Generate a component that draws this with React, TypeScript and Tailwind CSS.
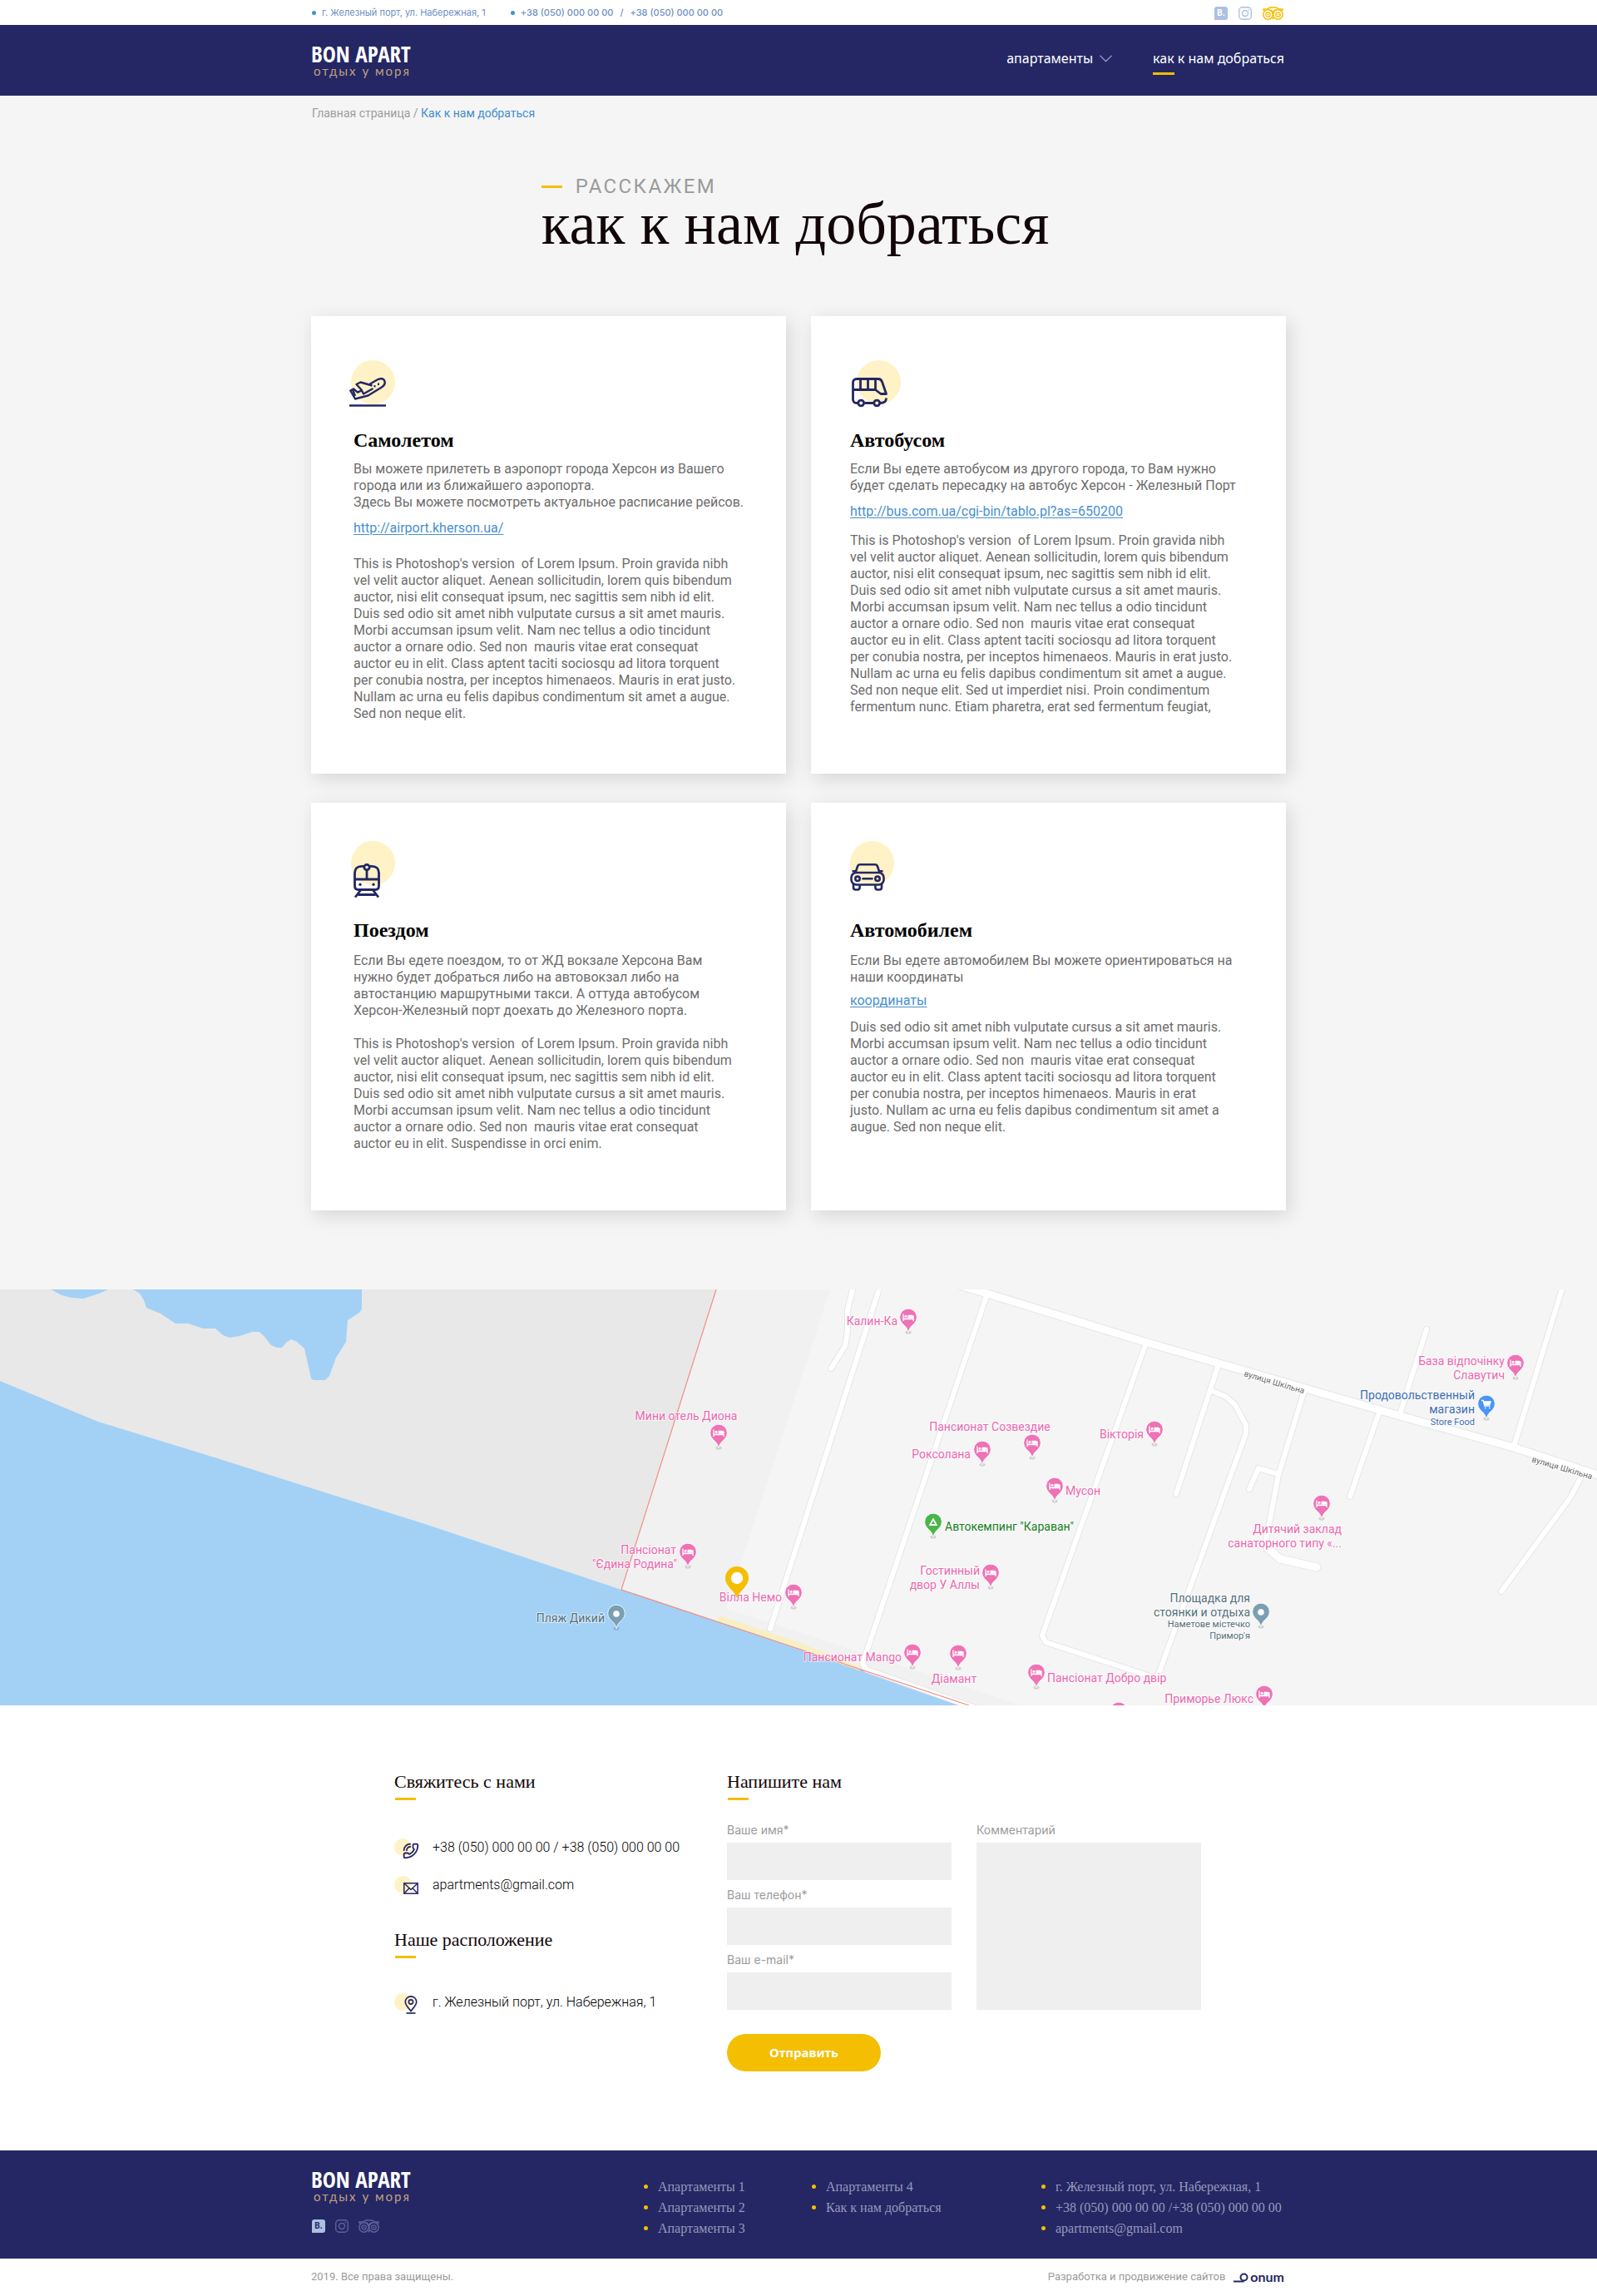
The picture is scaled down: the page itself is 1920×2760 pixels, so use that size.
import type { ReactNode } from "react";
import { PhoneCall } from "lucide-react";

const sans = "font-['Roboto',sans-serif]";
const serif = "font-['Liberation_Serif',serif]";

/* ---------- shared pieces ---------- */

function Container({ className = "", children }: { className?: string; children: ReactNode }) {
  return <div className={`mx-auto w-full max-w-[1172px] ${className}`}>{children}</div>;
}

function Logo() {
  return (
    <a href="#" className="flex w-fit flex-col whitespace-nowrap">
      <span className="font-['Open_Sans_Condensed','Roboto_Condensed',sans-serif] text-[27px] leading-6 font-bold text-white">
        BON APART
      </span>
      <span className="pl-[3px] font-['Lato',sans-serif] text-[15px] leading-4 tracking-[2px] text-[#c2a17c]">
        отдых у моря
      </span>
    </a>
  );
}

function BookingIcon({ className }: { className: string }) {
  return (
    <span
      className={`flex size-4 items-center justify-center rounded-[3px] rounded-bl-none font-['Roboto',sans-serif] text-[10px] leading-none font-bold ${className}`}
    >
      B.
    </span>
  );
}

function InstagramIcon() {
  return (
    <svg viewBox="0 0 16 16" className="size-4" fill="none" stroke="currentColor" strokeWidth="1.4">
      <rect x="0.7" y="0.7" width="14.6" height="14.6" rx="4" />
      <circle cx="8" cy="8" r="3.5" />
      <circle cx="12.2" cy="3.8" r="0.5" fill="currentColor" strokeWidth="0.8" />
    </svg>
  );
}

function TripadvisorIcon() {
  return (
    <svg viewBox="0 0 25 16" className="h-4 w-[25px]" fill="none" stroke="currentColor" strokeWidth="1.5">
      <circle cx="6.5" cy="9.5" r="5.7" />
      <circle cx="18.5" cy="9.5" r="5.7" />
      <circle cx="6.5" cy="9.5" r="2.7" strokeWidth="1.3" />
      <circle cx="18.5" cy="9.5" r="2.7" strokeWidth="1.3" />
      <circle cx="6.5" cy="9.5" r="0.9" fill="currentColor" stroke="none" />
      <circle cx="18.5" cy="9.5" r="0.9" fill="currentColor" stroke="none" />
      <path d="M0.300 3H5C7 1.500 9.600 0.800 12.500 0.800S18 1.500 20 3h4.700M0.500 3l1.800 2.500M24.500 3l-1.800 2.500M8.500 3.500c2.500.8 4 2.500 4 5 0-2.500 1.500-4.200 4-5" />
      <path d="M10.900 13h3.200l-1.600 3z" fill="currentColor" stroke="none" />
    </svg>
  );
}

/* ---------- header ---------- */

function TopBar() {
  return (
    <div className="bg-white font-['Inter',sans-serif] text-[11px] text-[#6d8fc4]">
      <Container className="flex h-[30px] items-center justify-between">
        <ul className="flex items-center gap-[30px]">
          <li className="flex items-center gap-[7px] pl-[1px]">
            <span className="size-[5px] rounded-full bg-[#4790cf]" />
            г. Железный порт, ул. Набережная, 1
          </li>
          <li className="flex items-center gap-[7px] font-medium">
            <span className="size-[5px] rounded-full bg-[#4790cf]" />
            <span className="flex gap-2">
              <a href="tel:+380500000000">+38 (050) 000 00 00</a>
              <span>/</span>
              <a href="tel:+380500000000">+38 (050) 000 00 00</a>
            </span>
          </li>
        </ul>
        <div className="flex items-center gap-[13px] pt-[2px] pr-[3px] text-[#adc0e2]">
          <a href="#" aria-label="Booking">
            <BookingIcon className="bg-[#adc0e2] text-white" />
          </a>
          <a href="#" aria-label="Instagram">
            <InstagramIcon />
          </a>
          <a href="#" aria-label="Tripadvisor" className="text-[#f4be02]">
            <TripadvisorIcon />
          </a>
        </div>
      </Container>
    </div>
  );
}

function Header() {
  return (
    <header className="bg-[#242764]">
      <Container className="flex h-[85px] items-start justify-between pt-[23px]">
        <Logo />
        <nav className="flex items-start gap-[49px] pt-[3px] pr-[2px] font-['Noto_Sans',sans-serif] text-base leading-7 text-white">
          <a href="#" className="flex items-center gap-2">
            апартаменты
            <svg viewBox="0 0 15 9" className="h-[9px] w-[15px]" fill="none" stroke="#9294b8" strokeWidth="1.400">
              <path d="M0.500 0.800l7 7 7-7" />
            </svg>
          </a>
          <a href="#" className="flex flex-col">
            как к нам добраться
            <span className="mt-[3px] h-[3px] w-[26px] bg-[#f4be02]" />
          </a>
        </nav>
      </Container>
    </header>
  );
}

/* ---------- transport icons ---------- */

function PlaneIcon() {
  return (
    <svg viewBox="0 0 44 36" className="h-9 w-11" fill="none" stroke="#242764" strokeWidth="2.400" strokeLinejoin="round">
      <path d="M24.500 7.800 34 2.300c3.600-2 7.200-1.200 8.300 1.500 1.100 2.900-.4 5.900-3.400 7.700L22.500 21.500 7 25.500 1.300 15.500l3.700-2 5 4.200 4.300-2.100" />
      <path d="M27.500 9.500 13.500 5.500 8.500 8l6 6.500 2.500 5 11.500-6.500" />
      <path d="M4 14.500l3 7.500" />
      <path d="M29.500 10.200h2M34 7.700h2" strokeWidth="2.600" />
      <path d="M0 33.500h44" />
    </svg>
  );
}

function BusIcon() {
  return (
    <svg viewBox="0 0 43 36" className="h-9 w-[43px]" fill="none" stroke="#242764" strokeWidth="2.800" strokeLinejoin="round">
      <path d="M7.500 30.500H6c-3 0-4.500-2-4.500-4.500V6c0-3 1.500-4.500 4.500-4.500h26c2.600 0 3.600 1 4.500 3.500l5 14.500H35l-6.500-5h-27M15.500 30.500h10.500M34 30.500c5 0 7.500-2 7.500-6" />
      <path d="M10.500 1.500v13M19.500 1.500v13M28.500 1.500v13" />
      <circle cx="11.200" cy="30.500" r="3.400" />
      <circle cx="30.200" cy="30.500" r="3.400" />
    </svg>
  );
}

function TrainIcon() {
  return (
    <svg viewBox="0 0 32 41" className="h-[41px] w-8" fill="none" stroke="#242764" strokeWidth="2.800" strokeLinejoin="round">
      <path d="M12 3.300H9.500c-5 0-8 3-8 8V27c0 3 1.500 4.500 4.500 4.500h20c3 0 4.500-1.500 4.500-4.500V11.300c0-5-3-8-8-8H20" />
      <circle cx="16" cy="4.500" r="3.200" />
      <path d="M16 8v11M1.500 19h29M9 31.500l-7 9M23 31.500l7 9M5.500 37.500h21" />
      <circle cx="8" cy="25.300" r="1.700" fill="#242764" stroke="none" />
      <circle cx="24" cy="25.300" r="1.700" fill="#242764" stroke="none" />
    </svg>
  );
}

function CarIcon() {
  return (
    <svg viewBox="0 0 42 33" className="h-[33px] w-[42px]" fill="none" stroke="#242764" strokeWidth="2.600" strokeLinejoin="round">
      <path d="M6.500 11 9 3.500c.5-1.500 1.200-2.200 3-2.200h18c1.800 0 2.500.7 3 2.200L35.500 11M6.500 9.300H2.500M35.500 9.300h4" />
      <rect x="1.500" y="11" width="39" height="14.500" rx="6" />
      <circle cx="9" cy="18.300" r="2.700" />
      <circle cx="33" cy="18.300" r="2.700" />
      <path d="M15.500 18.300h11" strokeLinecap="round" />
      <path d="M4 25v3.500c0 2.200 1 3 2.700 3h2.200c1.700 0 2.700-.8 2.700-3V25.500M30.400 25.500v3c0 2.200 1 3 2.700 3h2.200c1.700 0 2.700-.8 2.700-3V25" />
    </svg>
  );
}

/* ---------- cards ---------- */

interface CardProps {
  title: string;
  icon: ReactNode;
  circle: string;
  iconPlace: string;
  className: string;
  titleClass: string;
  intro: string[];
  link?: { text: string; className: string };
  bodyClass: string;
  body: string[];
}

function Lines({ lines, className = "" }: { lines: string[]; className?: string }) {
  return <p className={`whitespace-pre-line ${className}`}>{lines.join("\n").replace(/ {2}/g, "\u00a0 ")}</p>;
}

function Card({ title, icon, circle, iconPlace, className, titleClass, intro, link, bodyClass, body }: CardProps) {
  return (
    <article className={`bg-white pr-6 shadow-[4px_6px_22px_rgba(0,0,0,0.13)] ${className}`}>
      <div className="relative h-[60px]">
        <span className={`absolute top-0 size-[53px] rounded-full bg-[#fff2c6] ${circle}`} />
        <span className={`absolute ${iconPlace}`}>{icon}</span>
      </div>
      <h2 className={`text-2xl leading-7 font-bold text-black ${serif} ${titleClass}`}>{title}</h2>
      <div className={`text-base leading-5 text-[#6d6d6d] ${sans}`}>
        <Lines lines={intro} />
        {link && (
          <a href="#" className={`block w-fit text-[#4790cf] underline underline-offset-2 ${link.className}`}>
            {link.text}
          </a>
        )}
        <Lines lines={body} className={bodyClass} />
      </div>
    </article>
  );
}

const lorem = [
  "This is Photoshop's version  of Lorem Ipsum. Proin gravida nibh",
  "vel velit auctor aliquet. Aenean sollicitudin, lorem quis bibendum",
  "auctor, nisi elit consequat ipsum, nec sagittis sem nibh id elit.",
  "Duis sed odio sit amet nibh vulputate cursus a sit amet mauris.",
  "Morbi accumsan ipsum velit. Nam nec tellus a odio tincidunt",
  "auctor a ornare odio. Sed non  mauris vitae erat consequat",
  "auctor eu in elit. Class aptent taciti sociosqu ad litora torquent",
  "per conubia nostra, per inceptos himenaeos. Mauris in erat justo.",
  "Nullam ac urna eu felis dapibus condimentum sit amet a augue.",
];

const cards: CardProps[] = [
  {
    title: "Самолетом",
    icon: <PlaneIcon />,
    circle: "-left-[3px]",
    iconPlace: "top-[21px] -left-[5px]",
    className: "pt-[53px] pb-[62px] pl-[51px]",
    titleClass: "mt-[22px] mb-[11px]",
    intro: [
      "Вы можете прилететь в аэропорт города Херсон из Вашего",
      "города или из ближайшего аэропорта.",
      "Здесь Вы можете посмотреть актуальное расписание рейсов.",
    ],
    link: { text: "http://airport.kherson.ua/", className: "mt-[11px]" },
    bodyClass: "mt-[23px]",
    body: [...lorem, "Sed non neque elit."],
  },
  {
    title: "Автобусом",
    icon: <BusIcon />,
    circle: "left-[8px]",
    iconPlace: "top-[21px] left-[2px]",
    className: "pt-[53px] pb-[62px] pl-[47px]",
    titleClass: "mt-[22px] mb-[11px]",
    intro: [
      "Если Вы едете автобусом из другого города, то Вам нужно",
      "будет сделать пересадку на автобус Херсон - Железный Порт",
    ],
    link: { text: "http://bus.com.ua/cgi-bin/tablo.pl?as=650200", className: "mt-[11px]" },
    bodyClass: "mt-[15px]",
    body: [
      ...lorem,
      "Sed non neque elit. Sed ut imperdiet nisi. Proin condimentum",
      "fermentum nunc. Etiam pharetra, erat sed fermentum feugiat,",
    ],
  },
  {
    title: "Поездом",
    icon: <TrainIcon />,
    circle: "-left-[3px]",
    iconPlace: "top-[27px] left-0",
    className: "pt-[46px] pb-[70px] pl-[51px]",
    titleClass: "mt-[33px] mb-[13px]",
    intro: [
      "Если Вы едете поездом, то от ЖД вокзале Херсона Вам",
      "нужно будет добраться либо на автовокзал либо на",
      "автостанцию маршрутными такси. А оттуда автобусом",
      "Херсон-Железный порт доехать до Железного порта.",
    ],
    bodyClass: "mt-5",
    body: [...lorem.slice(0, 6), "auctor eu in elit. Suspendisse in orci enim."],
  },
  {
    title: "Автомобилем",
    icon: <CarIcon />,
    circle: "left-0",
    iconPlace: "top-[27px] left-0",
    className: "pt-[46px] pb-[70px] pl-[47px]",
    titleClass: "mt-[33px] mb-[13px]",
    intro: ["Если Вы едете автомобилем Вы можете ориентироваться на", "наши координаты"],
    link: { text: "координаты", className: "mt-2" },
    bodyClass: "mt-3",
    body: [
      ...lorem.slice(3, 7),
      "per conubia nostra, per inceptos himenaeos. Mauris in erat",
      "justo. Nullam ac urna eu felis dapibus condimentum sit amet a",
      "augue. Sed non neque elit.",
    ],
  },
];

function Directions() {
  return (
    <main className="bg-[#f5f5f5] pb-[95px]">
      <Container>
        <div className={`pt-[11px] pl-[1px] text-sm leading-5 text-[#9c9c9c] ${sans}`}>
          <a href="#">Главная страница</a> /{" "}
          <a href="#" className="text-[#3f8ecf]">
            Как к нам добраться
          </a>
        </div>
        <div className="mx-auto mt-16 w-fit pr-2">
          <p className={`flex items-center gap-4 text-2xl leading-7 tracking-widest text-[#9b9b9b] ${sans}`}>
            <span className="h-[3px] w-[25px] bg-[#f4be02]" />
            РАССКАЖЕМ
          </p>
          <h1 className={`text-7xl leading-[63px] whitespace-nowrap text-[#120608] ${serif}`}>
            как к нам добраться
          </h1>
        </div>
        <div className="mt-[79px] grid grid-cols-2 gap-x-[30px] gap-y-[35px]">
          {cards.map((card) => (
            <Card key={card.title} {...card} />
          ))}
        </div>
      </Container>
    </main>
  );
}

/* ---------- map ---------- */

const roads = [
  "M1058 -4 926 408",
  "M1026 -4 1019 25V50L1016 68 999 95",
  "M1187 5 1037 450 1042 457 1178 505",
  "M1378 64 1253 416 1257 424 1389 467",
  "M1465 90 1414 246",
  "M1457 122 1474 129 1485 139 1498 163V173L1392 465",
  "M1568 122 1537 223 1522 302 1524 312",
  "M1537 222 1513 215 1502 240",
  "M1658 148 1623 249",
  "M1715 48 1683 150",
  "M1879 -4 1820 189",
  "M1903 222 1888 250 1805 363",
];
const wideRoads = ["M1150 -6 1187 5 1376 63 1566 118 1683 152 1820 190 1930 226", "M1524 311 1539 324 1583 334"];

type PinKind = "hotel" | "camp" | "shop" | "place";
const pinColor: Record<PinKind, string> = { hotel: "#ee72b6", camp: "#49b649", shop: "#4a94f5", place: "#7b9fb2" };
const textColor: Record<PinKind, string> = { hotel: "#ec69b1", camp: "#17801c", shop: "#3c6eb6", place: "#56707d" };

function Pin({ x, y, kind }: { x: number; y: number; kind: PinKind }) {
  return (
    <g transform={`translate(${x} ${y})`}>
      <ellipse cx="0" cy="27.500" rx="3.500" ry="2" fill="#000" opacity="0.150" />
      <path
        d="M0 28C-1 22-4.500 19.500-7.500 16.500A10.300 10.300 0 1 1 7.500 16.500C4.500 19.500 1 22 0 28Z"
        fill={pinColor[kind]}
        stroke="#fff"
        strokeWidth="0.800"
      />
      {kind === "hotel" && (
        <g fill="#fff">
          <path d="M-6.700 5.500h1.300v5h10.800v-3h1.300v6.500h-1.300v-1.800H-5.400V14h-1.300z" />
          <path d="M-0.500 6.800h4.600c1.200 0 1.800.7 1.800 1.800v2h-6.400z" />
          <circle cx="-3" cy="8.300" r="1.500" />
        </g>
      )}
      {kind === "camp" && <path d="M-3.800 13 0 6.300 3.800 13Z" fill="none" stroke="#fff" strokeWidth="1.800" />}
      {kind === "shop" && (
        <g fill="none" stroke="#fff" strokeWidth="1.500">
          <path d="M-6 5.500h2.200l1.800 6.500h6.500" />
          <path d="M-3 7h8l-1.200 3.300h-6z" fill="#fff" />
          <path d="M-2 14.500h1.500M3 14.500h1.500" />
        </g>
      )}
      {kind === "place" && <circle cx="0" cy="10" r="3.800" fill="#fff" />}
    </g>
  );
}

interface Place {
  kind: PinKind;
  pin: [number, number];
  anchor: "start" | "middle" | "end";
  lines: [number, number, string, number?][];
}

const places: Place[] = [
  { kind: "hotel", pin: [864, 163], anchor: "middle", lines: [[825, 157, "Мини отель Диона"]] },
  { kind: "hotel", pin: [827, 306], anchor: "end", lines: [[813, 318, "Пансіонат"], [814, 335, "\"Єдина Родина\""]] },
  { kind: "hotel", pin: [954, 355], anchor: "end", lines: [[940, 375, "Вілла Немо"]] },
  { kind: "place", pin: [741, 380], anchor: "end", lines: [[727, 400, "Пляж Дикий"]] },
  { kind: "hotel", pin: [1092, 24], anchor: "end", lines: [[1079, 43, "Калин-Ка"]] },
  { kind: "hotel", pin: [1241, 175], anchor: "middle", lines: [[1190, 170, "Пансионат Созвездие"]] },
  { kind: "hotel", pin: [1181, 183], anchor: "end", lines: [[1167, 203, "Роксолана"]] },
  { kind: "hotel", pin: [1388, 159], anchor: "end", lines: [[1375, 179, "Вікторія"]] },
  { kind: "hotel", pin: [1268, 227], anchor: "start", lines: [[1281, 247, "Мусон"]] },
  { kind: "camp", pin: [1122, 270], anchor: "start", lines: [[1136, 290, "Автокемпинг \"Караван\""]] },
  { kind: "hotel", pin: [1191, 331], anchor: "end", lines: [[1178, 343, "Гостинный"], [1178, 360, "двор У Аллы"]] },
  { kind: "hotel", pin: [1097, 427], anchor: "end", lines: [[1084, 447, "Пансионат Mango"]] },
  { kind: "hotel", pin: [1152, 428], anchor: "middle", lines: [[1147, 473, "Діамант"]] },
  { kind: "hotel", pin: [1246, 451], anchor: "start", lines: [[1259, 472, "Пансіонат Добро двір"]] },
  { kind: "hotel", pin: [1520, 477], anchor: "end", lines: [[1507, 497, "Приморье Люкс"]] },
  { kind: "hotel", pin: [1345, 497], anchor: "end", lines: [] },
  { kind: "hotel", pin: [1589, 248], anchor: "end", lines: [[1613, 293, "Дитячий заклад"], [1613, 310, "санаторного типу «..."]] },
  {
    kind: "place",
    pin: [1516, 378],
    anchor: "end",
    lines: [
      [1503, 376, "Площадка для"],
      [1503, 393, "стоянки и отдыха"],
      [1503, 406, "Наметове містечко", 11],
      [1503, 420, "Примор'я", 11],
    ],
  },
  { kind: "hotel", pin: [1822, 79], anchor: "end", lines: [[1809, 91, "База відпочінку"], [1809, 108, "Славутич"]] },
  {
    kind: "shop",
    pin: [1787, 128],
    anchor: "end",
    lines: [
      [1773, 132, "Продовольственный"],
      [1773, 149, "магазин"],
      [1773, 163, "Store Food", 11],
    ],
  },
];

function MapView() {
  return (
    <svg
      viewBox="0 0 1920 500"
      preserveAspectRatio="xMidYMid slice"
      className="block h-[500px] w-full font-['Roboto',sans-serif]"
      role="img"
      aria-label="Карта"
    >
      <rect width="1920" height="500" fill="#f5f5f5" />
      <path d="M747 361 861 0H998L873 384 960 412 1229 500H1160L960 432Z" fill="#f1f1f1" />
      <path d="M0 0H861L747 361 0 200Z" fill="#e8e8e8" />
      <path d="M0 110 118 159 245 198 514 283 747 361 960 432 1165 500H0Z" fill="#a3d1f5" />
      <path d="M61 0 74 7 86 10 100 11 119 5 130 0Z" fill="#a3d1f5" />
      <path
        d="M160 0 168 5 173 13 176 22 193 29 211 41H227L244 47H259L268 55 276 58 288 56 303 51H312L318 57 326 67 333 70H339L344 64 350 60 357 63 366 71 374 107 377 109H391L396 104 404 82 416 63 418 37 432 28 435 23V0Z"
        fill="#a3d1f5"
      />
      <path d="M865 392 960 424 1035 454 1033 458 960 432 862 399Z" fill="#f9efc4" />
      <g fill="none" strokeLinejoin="round" strokeLinecap="round">
        {roads.map((d) => (
          <path key={d} d={d} stroke="#e6e6e6" strokeWidth="8" />
        ))}
        {wideRoads.map((d) => (
          <path key={d} d={d} stroke="#e6e6e6" strokeWidth="11" />
        ))}
        {roads.map((d) => (
          <path key={d} d={d} stroke="#fff" strokeWidth="6" />
        ))}
        {wideRoads.map((d) => (
          <path key={d} d={d} stroke="#fff" strokeWidth="9" />
        ))}
      </g>
      <path d="M861 0 747 361 960 432 1165 500" fill="none" stroke="#ef8f88" strokeWidth="1.200" />
      <g fill="#6b6b6b" fontSize="10" stroke="#fff" strokeWidth="2" paintOrder="stroke">
        <text transform="translate(1495 104) rotate(16.500)">вулиця Шкільна</text>
        <text transform="translate(1841 207) rotate(16.500)">вулиця Шкільна</text>
      </g>
      {places.map((p) => (
        <g key={p.pin.join()}>
          <Pin x={p.pin[0]} y={p.pin[1]} kind={p.kind} />
          {p.lines.map(([x, y, text, size]) => (
            <text
              key={text}
              x={x}
              y={y}
              textAnchor={p.anchor}
              fontSize={size ?? 14}
              fill={textColor[p.kind]}
              stroke="#fff"
              strokeOpacity="0.600"
              strokeWidth="2"
              strokeLinejoin="round"
              paintOrder="stroke"
            >
              {text}
            </text>
          ))}
        </g>
      ))}
      <path d="M886 371C883 362 872 357 872 347A14 14 0 1 1 900 347C900 357 889 362 886 371Z" fill="#f4be02" />
      <circle cx="886" cy="347" r="7.200" fill="#fff" />
    </svg>
  );
}

/* ---------- contacts ---------- */

function SectionTitle({ children }: { children: ReactNode }) {
  return (
    <>
      <h3 className={`text-[22px] leading-7 text-[#120608] ${serif}`}>{children}</h3>
      <span className="mt-[5px] ml-[1px] block h-[3px] w-[25px] bg-[#f4be02]" />
    </>
  );
}

function ContactRow({ icon, place, className, children }: { icon: ReactNode; place: string; className: string; children: ReactNode }) {
  return (
    <div className={`flex items-start gap-4 text-base leading-[22px] font-light whitespace-nowrap text-black ${sans} ${className}`}>
      <span className="relative h-[26px] w-[30px]">
        <span className="absolute top-0 left-0 size-[21px] rounded-full bg-[#fff2c6]" />
        <span className={`absolute ${place}`}>{icon}</span>
      </span>
      {children}
    </div>
  );
}

function Field({ id, label, type }: { id: string; label: string; type: string }) {
  return (
    <div className="flex flex-col gap-[5px]">
      <label htmlFor={id}>{label}</label>
      <input id={id} type={type} className="h-[45px] w-full bg-[#efefef] px-3 outline-none" />
    </div>
  );
}

function Contacts() {
  return (
    <section className="bg-white pt-[78px] pb-[95px]">
      <Container className="grid grid-cols-[400px_1fr] pl-[100px]">
        <div>
          <SectionTitle>Свяжитесь с нами</SectionTitle>
          <ContactRow
            className="mt-[46px]"
            place="top-[5px] left-[10px]"
            icon={<PhoneCall className="size-5 -scale-x-100 text-[#242764]" strokeWidth={2.2} />}
          >
            <a href="tel:+380500000000">+38 (050) 000 00 00 / +38 (050) 000 00 00</a>
          </ContactRow>
          <ContactRow
            className="mt-[19px]"
            place="top-2 left-[11px]"
            icon={
              <svg viewBox="0 0 18 14" className="h-[14px] w-[18px]" fill="none" stroke="#242764" strokeWidth="1.500">
                <rect x="0.800" y="0.800" width="16.400" height="12.400" />
                <path d="M1 1l8 7.500L17 1M1 13l5.800-6M17 13l-5.800-6" />
              </svg>
            }
          >
            <a href="mailto:apartments@gmail.com">apartments@gmail.com</a>
          </ContactRow>
          <div className="mt-[37px]">
            <SectionTitle>Наше расположение</SectionTitle>
          </div>
          <ContactRow
            className="mt-[42px]"
            place="top-[3px] left-[12px]"
            icon={
              <svg viewBox="0 0 16 22" className="h-[22px] w-4" fill="none" stroke="#242764" strokeWidth="1.700">
                <path d="M8 18.500C5.500 15 1.300 11.500 1.300 7.500a6.700 6.700 0 0 1 13.400 0c0 4-4.200 7.500-6.700 11Z" />
                <circle cx="8" cy="7.500" r="2.600" />
                <path d="M2.500 21h11" />
              </svg>
            }
          >
            г. Железный порт, ул. Набережная, 1
          </ContactRow>
        </div>
        <div>
          <SectionTitle>Напишите нам</SectionTitle>
          <form
            className="mt-[26px] font-['Inter',sans-serif] text-sm leading-5 text-[#9b9b9b]"
            onSubmit={(e) => e.preventDefault()}
          >
            <div className="grid grid-cols-[270px_270px] gap-x-[30px]">
              <div className="flex flex-col gap-2">
                <Field id="name" label="Ваше имя*" type="text" />
                <Field id="phone" label="Ваш телефон*" type="tel" />
                <Field id="email" label="Ваш e-mail*" type="email" />
              </div>
              <div className="flex flex-col gap-[5px]">
                <label htmlFor="comment">Комментарий</label>
                <textarea id="comment" className="w-full grow resize-none bg-[#efefef] p-3 outline-none" />
              </div>
            </div>
            <button
              type="submit"
              className="mt-[29px] h-[45px] w-[185px] rounded-full bg-[#f4be02] pb-[2px] font-['Noto_Sans',sans-serif] text-[15px] font-bold text-white"
            >
              Отправить
            </button>
          </form>
        </div>
      </Container>
    </section>
  );
}

/* ---------- footer ---------- */

function FooterList({ items }: { items: string[] }) {
  return (
    <ul className="pt-2 text-base leading-[25px] whitespace-nowrap">
      {items.map((item) => (
        <li key={item} className="flex items-center gap-3">
          <span className="size-[5px] rounded-full bg-[#f4be02]" />
          <a href="#">{item}</a>
        </li>
      ))}
    </ul>
  );
}

function Footer() {
  return (
    <footer>
      <div className={`bg-[#242764] pt-[23px] pb-6 text-[#9798bb] ${serif}`}>
        <Container className="grid grid-cols-[400px_202px_276px_1fr]">
          <div>
            <Logo />
            <div className="mt-5 flex items-center gap-3 pl-[1px] text-[#5f6196]">
              <a href="#" aria-label="Booking">
                <BookingIcon className="bg-[#adc0e2] text-[#242764]" />
              </a>
              <a href="#" aria-label="Instagram">
                <InstagramIcon />
              </a>
              <a href="#" aria-label="Tripadvisor">
                <TripadvisorIcon />
              </a>
            </div>
          </div>
          <FooterList items={["Апартаменты 1", "Апартаменты 2", "Апартаменты 3"]} />
          <FooterList items={["Апартаменты 4", "Как к нам добраться"]} />
          <FooterList
            items={["г. Железный порт, ул. Набережная, 1", "+38 (050) 000 00 00 /+38 (050) 000 00 00", "apartments@gmail.com"]}
          />
        </Container>
      </div>
      <div className={`bg-white text-[13px] text-[#9b9b9b] ${sans}`}>
        <Container className="flex h-[45px] items-center justify-between pr-[2px] pb-[2px]">
          <span>2019. Все права защищены.</span>
          <span className="flex items-center gap-[10px]">
            Разработка и продвижение сайтов
            <a href="#" className="flex items-center gap-[2px] font-['Lato',sans-serif] text-base leading-5 font-bold text-[#242764]">
              <svg viewBox="0 0 18 12" className="mt-[3px] h-3 w-[18px]" fill="none" stroke="currentColor" strokeWidth="2" aria-hidden="true">
                <circle cx="12.500" cy="5.500" r="4" />
                <path d="M0 10.500h12.500" />
              </svg>
              onum
            </a>
          </span>
        </Container>
      </div>
    </footer>
  );
}

export default function App() {
  return (
    <div className="bg-white">
      <TopBar />
      <Header />
      <Directions />
      <MapView />
      <Contacts />
      <Footer />
    </div>
  );
}
